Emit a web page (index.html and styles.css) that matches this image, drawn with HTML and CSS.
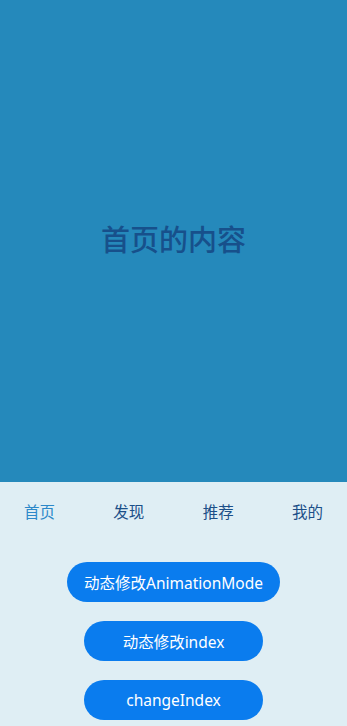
FILE: index.html
```html
<!DOCTYPE html><html lang="zh">
<head>
<meta charset="UTF-8">
<meta name="viewport" content="width=device-width,initial-scale=1.0">
<title>Tabs</title>
<link rel="stylesheet" href="styles.css">
</head>
<body>
<main class="page">
<section class="content"><h1>首页的内容</h1></section>
<nav class="tabs">
<span class="tab active">首页</span>
<span class="tab">发现</span>
<span class="tab">推荐</span>
<span class="tab">我的</span>
</nav>
<div class="actions">
<button class="btn wide">动态修改AnimationMode</button>
<button class="btn">动态修改index</button>
<button class="btn">changeIndex</button>
</div>
</main>
</body>
</html>
```
FILE: styles.css
```css
*,*::before,*::after{margin:0;padding:0;box-sizing:border-box}
body{font-family:"Noto Sans","Noto Sans CJK SC",sans-serif;background:#dfeef4;height:726px;overflow:hidden}
.page{display:flex;flex-direction:column;height:726px}
.content{height:482px;background:#2589bb;display:flex;align-items:center;justify-content:center}
.content h1{font-size:29px;font-weight:500;color:#17508b;line-height:1;margin-top:-4px}
.tabs{height:58px;display:flex;justify-content:space-between;align-items:center;padding:0 24px;font-size:15.5px;color:#1b4f88}
.tab.active{color:#2c88c9}
.actions{display:flex;flex-direction:column;align-items:center;gap:19px;padding-top:22px}
.btn{height:40px;width:179px;border:none;border-radius:20px;background:#0a7cee;color:#fff;font-family:inherit;font-size:15.5px}
.btn.wide{width:213px}
```
